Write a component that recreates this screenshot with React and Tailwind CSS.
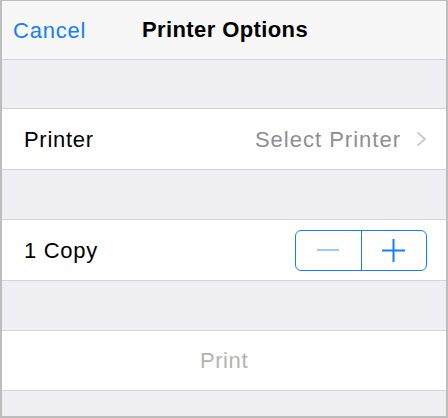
import React from "react";

export default function App() {
  return (
    <div className="w-[448px] h-[418px] flex flex-col bg-[#efeff4] border-t border-l-2 border-r-2 border-b-2 border-[#bdbdbd] font-['Liberation_Sans',Arial,sans-serif] overflow-hidden">
      {/* nav bar */}
      <div className="h-[59px] shrink-0 relative flex items-center justify-center bg-[#f7f7f7] border-b border-[#d4d4d6]">
        <button className="absolute left-[11px] top-[13px] text-[22px] tracking-[0.8px] text-[#157efb]">
          Cancel
        </button>
        <h1 className="text-[22px] font-bold tracking-[0.4px] text-black -mt-[1px] ml-[2px]">
          Printer Options
        </h1>
      </div>

      <div className="h-[49px] shrink-0 border-b border-[#d4d4d6]" />

      <div className="h-[61px] shrink-0 flex items-center justify-between bg-white pl-[22px] pr-[19px] border-b border-[#d4d4d6]">
        <span className="text-[22px] tracking-[0.7px] text-black">Printer</span>
        <div className="flex items-center gap-[15px]">
          <span className="text-[22px] tracking-[1px] text-[#8e8e93]">Select Printer</span>
          <svg width="11" height="16" viewBox="0 0 11 16" fill="none">
            <path d="M1.5 1.5l7.5 6.5-7.5 6.5" stroke="#c7c7cc" strokeWidth="1.7" />
          </svg>
        </div>
      </div>

      <div className="h-[50px] shrink-0 border-b border-[#d4d4d6]" />

      <div className="h-[61px] shrink-0 flex items-center justify-between bg-white pl-[22px] pr-[19px] border-b border-[#d4d4d6]">
        <span className="text-[22px] tracking-[0.7px] text-black">1 Copy</span>
        <div className="flex w-[132px] h-[41px] border-[1.5px] border-[#157efb] rounded-[6px] overflow-hidden">
          <button className="flex-1 flex items-center justify-center border-r border-[#157efb]">
            <span className="block w-[22px] h-[2px] bg-[#9ccaf9]" />
          </button>
          <button className="flex-1 flex items-center justify-center">
            <svg width="23" height="23" viewBox="0 0 23 23">
              <path d="M11.5 0v23M0 11.5h23" stroke="#157efb" strokeWidth="2" />
            </svg>
          </button>
        </div>
      </div>

      <div className="h-[50px] shrink-0 border-b border-[#d4d4d6]" />

      <div className="h-[60px] shrink-0 flex items-center justify-center bg-white border-b border-[#d4d4d6]">
        <span className="text-[22px] tracking-[0.6px] text-[#b3b3b3]">Print</span>
      </div>

      <div className="flex-1" />
    </div>
  );
}
